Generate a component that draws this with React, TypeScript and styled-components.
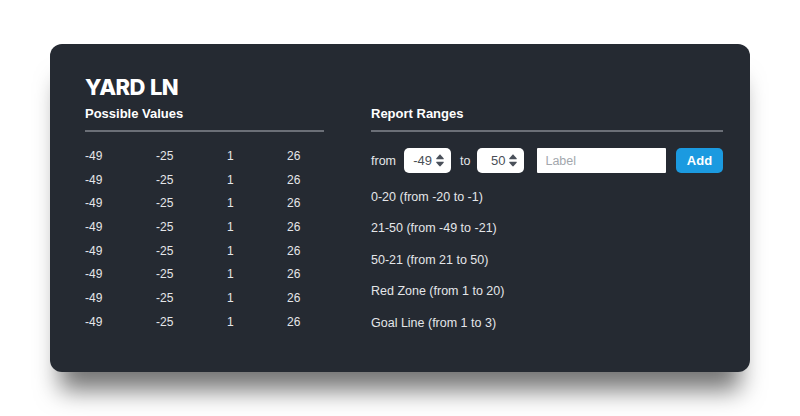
import styled, { createGlobalStyle } from 'styled-components';

const GlobalStyle = createGlobalStyle`
  html, body {
    margin: 0;
    padding: 0;
    background: #ffffff;
  }
  body {
    font-family: "Liberation Sans", Arial, sans-serif;
  }
`;

const Page = styled.div`
  width: 800px;
  height: 416px;
  padding: 44px 50px 0 50px;
  box-sizing: border-box;
`;

const Card = styled.div`
  width: 700px;
  height: 328px;
  box-sizing: border-box;
  background: #252a32;
  border-radius: 12px;
  padding: 29px 27px 0 35px;
  box-shadow: 0 28px 24px -10px rgba(0, 0, 0, 0.55);
  color: #e4e6e9;
`;

const Title = styled.h1`
  margin: 0;
  font-family: Inter, "Liberation Sans", sans-serif;
  font-weight: 800;
  font-size: 22px;
  line-height: 28px;
  letter-spacing: -0.6px;
  word-spacing: 1px;
  color: #ffffff;
`;

const Columns = styled.div`
  display: grid;
  grid-template-columns: 239px 352px;
  column-gap: 47px;
  margin-top: 5px;
`;

const Column = styled.div`
  display: flex;
  flex-direction: column;
`;

const Heading = styled.h2`
  margin: 0;
  font-size: 13px;
  line-height: 16px;
  font-weight: 700;
  color: #ffffff;
  padding-bottom: 8px;
  border-bottom: 2px solid #6b6f77;
`;

const ValueGrid = styled.div`
  display: grid;
  grid-template-columns: 71px 71px 60px 1fr;
  grid-auto-rows: 23.7px;
  align-items: center;
  margin-top: 12px;
  font-size: 12px;
`;

const Controls = styled.div`
  display: flex;
  align-items: center;
  margin-top: 16px;
  height: 25px;
  font-size: 12.5px;
`;

const Word = styled.span<{ $gap: number }>`
  margin-right: ${p => p.$gap}px;
`;

const Spinner = styled.div`
  display: flex;
  align-items: center;
  justify-content: flex-end;
  gap: 4px;
  width: 47px;
  height: 25px;
  box-sizing: border-box;
  padding-right: 7px;
  background: #ffffff;
  border-radius: 5px;
  color: #4a4f57;
  font-size: 13px;
  margin-right: 9px;
`;

const LabelInput = styled.input`
  width: 129px;
  height: 25px;
  box-sizing: border-box;
  border: none;
  border-radius: 1px;
  padding: 0 8px;
  margin-left: 4px;
  font-family: inherit;
  font-size: 12.5px;
  color: #333;
  &::placeholder {
    color: #a3a7ad;
  }
  &:focus {
    outline: none;
  }
`;

const AddButton = styled.button`
  margin-left: auto;
  width: 47px;
  height: 25px;
  border: none;
  border-radius: 5px;
  background: #1b9ae0;
  color: #ffffff;
  font-family: inherit;
  font-weight: 700;
  font-size: 13px;
  padding: 0;
`;

const RangeList = styled.ul`
  list-style: none;
  margin: 8px 0 0 0;
  padding: 0;
  font-size: 12.5px;
  li {
    height: 31.5px;
    display: flex;
    align-items: center;
  }
`;

const Arrows = () => (
  <svg width="8" height="13" viewBox="0 0 8 13">
    <path d="M4 0.5 C4.3 0.5 4.5 0.7 4.7 0.9 L7.6 4.3 C8 4.8 7.7 5.3 7.1 5.3 L0.9 5.3 C0.3 5.3 0 4.8 0.4 4.3 L3.3 0.9 C3.5 0.7 3.7 0.5 4 0.5 Z" fill="#4a505a" />
    <path d="M4 12.5 C3.7 12.5 3.5 12.3 3.3 12.1 L0.4 8.7 C0 8.2 0.3 7.7 0.9 7.7 L7.1 7.7 C7.7 7.7 8 8.2 7.6 8.7 L4.7 12.1 C4.5 12.3 4.3 12.5 4 12.5 Z" fill="#4a505a" />
  </svg>
);

const rows = Array.from({ length: 8 }, () => ['-49', '-25', '1', '26']);

const ranges = [
  '0-20 (from -20 to -1)',
  '21-50 (from -49 to -21)',
  '50-21 (from 21 to 50)',
  'Red Zone (from 1 to 20)',
  'Goal Line (from 1 to 3)',
];

const App = () => {
  return (
    <Page>
      <GlobalStyle />
      <Card>
        <Title>YARD LN</Title>
        <Columns>
          <Column>
            <Heading>Possible Values</Heading>
            <ValueGrid>
              {rows.map((r, i) =>
                r.map((v, j) => <span key={`${i}-${j}`}>{v}</span>)
              )}
            </ValueGrid>
          </Column>
          <Column>
            <Heading>Report Ranges</Heading>
            <Controls>
              <Word $gap={8}>from</Word>
              <Spinner>
                <span>-49</span>
                <Arrows />
              </Spinner>
              <Word $gap={7}>to</Word>
              <Spinner>
                <span>50</span>
                <Arrows />
              </Spinner>
              <LabelInput placeholder="Label" />
              <AddButton>Add</AddButton>
            </Controls>
            <RangeList>
              {ranges.map(r => (
                <li key={r}>{r}</li>
              ))}
            </RangeList>
          </Column>
        </Columns>
      </Card>
    </Page>
  );
};

export default App;
